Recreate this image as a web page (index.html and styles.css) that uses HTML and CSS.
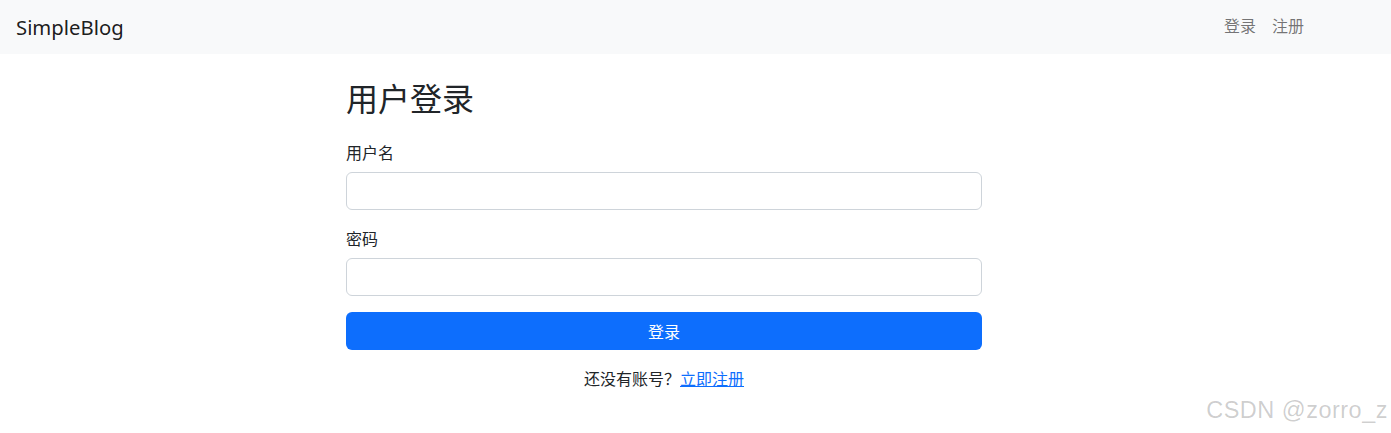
FILE: index.html
```html
<!DOCTYPE html>
<html lang="zh-CN">
<head>
<meta charset="utf-8">
<title>SimpleBlog - 用户登录</title>
<link rel="stylesheet" href="styles.css">
</head>
<body>
<nav class="navbar">
  <a class="brand" href="#">SimpleBlog</a>
  <ul class="nav-links">
    <li><a class="nav-link" href="#">登录</a></li>
    <li><a class="nav-link" href="#">注册</a></li>
  </ul>
</nav>
<main class="container">
  <h2 class="title">用户登录</h2>
  <form class="form">
    <div class="field">
      <label class="label" for="username">用户名</label>
      <input class="input" id="username" type="text">
    </div>
    <div class="field">
      <label class="label" for="password">密码</label>
      <input class="input" id="password" type="password">
    </div>
    <button class="btn" type="button">登录</button>
  </form>
  <p class="signup">还没有账号？<a class="link" href="#">立即注册</a></p>
</main>
<div class="watermark">CSDN @zorro_z</div>
</body>
</html>
```
FILE: styles.css
```css
* { box-sizing: border-box; }
html, body { margin: 0; padding: 0; }
body {
  font-family: "Noto Sans", "Noto Sans CJK SC", sans-serif;
  font-size: 16px;
  line-height: 1.5;
  color: #212529;
  background: #fff;
  width: 1391px;
  height: 433px;
  position: relative;
  overflow: hidden;
}
.navbar {
  height: 54px;
  background: #f8f9fa;
  display: flex;
  align-items: center;
  padding: 0 79px 0 16px;
}
.brand {
  font-size: 20.3px;
  color: rgba(0,0,0,.9);
  text-decoration: none;
  line-height: 30px;
}
.nav-links {
  list-style: none;
  margin: 0 0 0 auto;
  padding: 0;
  display: flex;
}
.nav-link {
  display: block;
  padding: 6px 8px 10px;
  color: rgba(0,0,0,.55);
  text-decoration: none;
  font-family: "Noto Sans CJK SC", sans-serif;
  font-size: 16px;
}
.container {
  width: 636px;
  margin: 24px 0 0 346px;
}
.title {
  font-family: "Noto Sans CJK SC", sans-serif;
  font-size: 32px;
  font-weight: 400;
  line-height: 1.2;
  margin: 0 0 24px;
}
.field { margin-bottom: 16px; }
.label {
  display: block;
  margin-bottom: 8px;
  font-family: "Noto Sans CJK SC", sans-serif;
  font-size: 16px;
  line-height: 24px;
}
.input {
  display: block;
  width: 100%;
  height: 38px;
  border: 1px solid #ced4da;
  border-radius: 6px;
  background: #fff;
  font-size: 16px;
  padding: 6px 12px;
}
.btn {
  display: block;
  width: 100%;
  height: 38px;
  border: 0;
  border-radius: 6px;
  background: #0d6efd;
  color: #fff;
  font-family: "Noto Sans CJK SC", sans-serif;
  font-size: 16px;
  line-height: 24px;
}
.signup {
  margin: 16px 0 0;
  text-align: center;
  font-family: "Noto Sans CJK SC", sans-serif;
  font-size: 16px;
  line-height: 24px;
}
.link { color: #0d6efd; text-decoration: underline; }
.watermark {
  position: absolute;
  right: 3px;
  bottom: 5px;
  font-family: "Liberation Sans", sans-serif;
  font-size: 23.5px;
  color: rgba(0,0,0,.2);
  letter-spacing: 0.5px;
}
```
